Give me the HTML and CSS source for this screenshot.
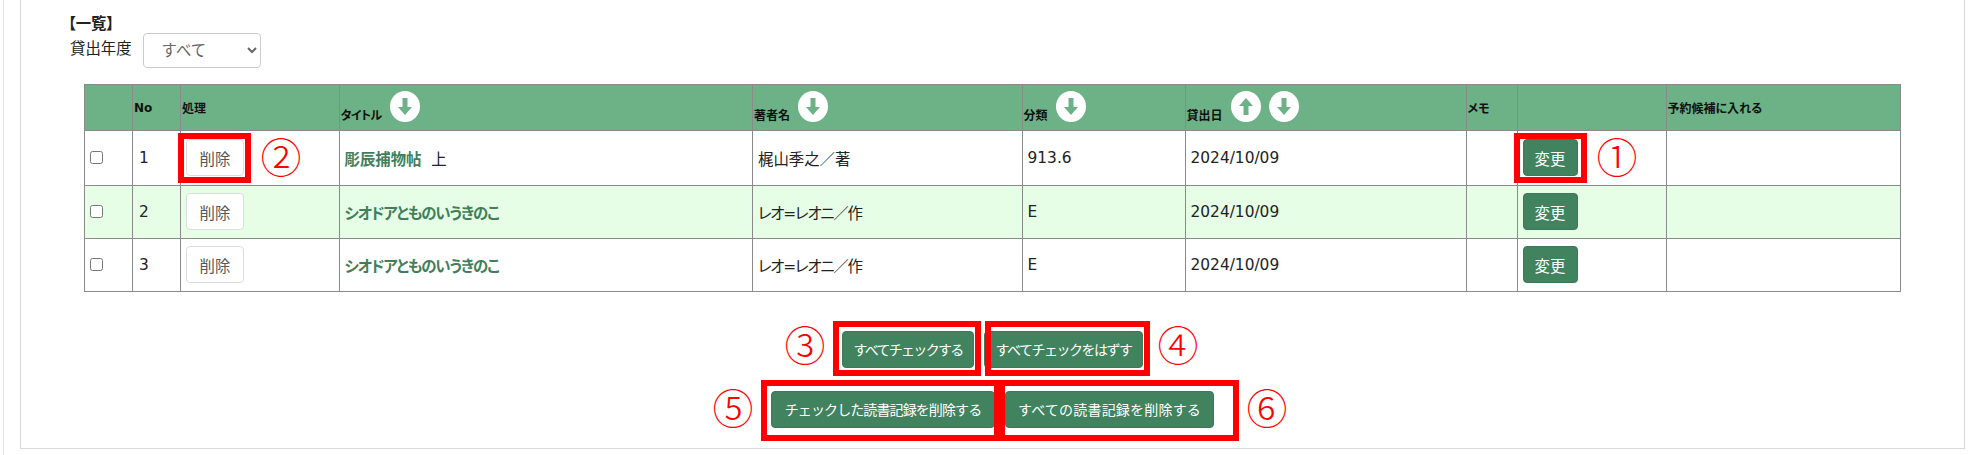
FILE: index.html
```html
<!DOCTYPE html>
<html lang="ja">
<head>
    <meta charset="UTF-8">
    <title>読書記録</title>
    <link rel="stylesheet" href="styles.css">
</head>
<body>
    <div class="page">
        <div class="panel">
            <div class="list-title">【一覧】</div>
            <div class="year-filter">
                <label for="year">貸出年度</label>
                <select id="year"><option>すべて</option></select>
            </div>

            <table class="records">
                <colgroup>
                    <col class="c-check"><col class="c-no"><col class="c-action"><col class="c-title"><col class="c-author">
                    <col class="c-class"><col class="c-date"><col class="c-memo"><col class="c-change"><col class="c-reserve">
                </colgroup>
                <thead>
                    <tr>
                        <th></th>
                        <th>No</th>
                        <th>処理</th>
                        <th class="sortable"><span class="th-title">タイトル</span> <svg class="sort" viewBox="0 0 30 31"><ellipse cx="15" cy="15.5" rx="15" ry="15.5" fill="#fff"/><path d="M12.5 7h5v9h4.5l-7 8-7-8h4.5z" fill="#6db286"/></svg></th>
                        <th class="sortable">著者名 <svg class="sort" viewBox="0 0 30 31"><ellipse cx="15" cy="15.5" rx="15" ry="15.5" fill="#fff"/><path d="M12.5 7h5v9h4.5l-7 8-7-8h4.5z" fill="#6db286"/></svg></th>
                        <th class="sortable">分類 <svg class="sort" viewBox="0 0 30 31"><ellipse cx="15" cy="15.5" rx="15" ry="15.5" fill="#fff"/><path d="M12.5 7h5v9h4.5l-7 8-7-8h4.5z" fill="#6db286"/></svg></th>
                        <th class="sortable">貸出日 <svg class="sort" viewBox="0 0 30 31"><ellipse cx="15" cy="15.5" rx="15" ry="15.5" fill="#fff"/><path d="M12.5 24h5v-9h4.5l-7-8-7 8h4.5z" fill="#6db286"/></svg> <svg class="sort" viewBox="0 0 30 31"><ellipse cx="15" cy="15.5" rx="15" ry="15.5" fill="#fff"/><path d="M12.5 7h5v9h4.5l-7 8-7-8h4.5z" fill="#6db286"/></svg></th>
                        <th>メモ</th>
                        <th></th>
                        <th>予約候補に入れる</th>
                    </tr>
                </thead>
                <tbody>
                    <tr class="first">
                        <td><input type="checkbox"></td>
                        <td class="no">1</td>
                        <td><button class="btn btn-white">削除</button></td>
                        <td><a class="book">彫辰捕物帖</a>&nbsp; 上</td>
                        <td>梶山季之／著</td>
                        <td>913.6</td>
                        <td>2024/10/09</td>
                        <td></td>
                        <td><button class="btn btn-green">変更</button></td>
                        <td></td>
                    </tr>
                    <tr class="even">
                        <td><input type="checkbox"></td>
                        <td class="no">2</td>
                        <td><button class="btn btn-white">削除</button></td>
                        <td><a class="book kana">シオドアとものいうきのこ</a></td>
                        <td class="kana">レオ=レオニ／作</td>
                        <td>E</td>
                        <td>2024/10/09</td>
                        <td></td>
                        <td><button class="btn btn-green">変更</button></td>
                        <td></td>
                    </tr>
                    <tr>
                        <td><input type="checkbox"></td>
                        <td class="no">3</td>
                        <td><button class="btn btn-white">削除</button></td>
                        <td><a class="book kana">シオドアとものいうきのこ</a></td>
                        <td class="kana">レオ=レオニ／作</td>
                        <td>E</td>
                        <td>2024/10/09</td>
                        <td></td>
                        <td><button class="btn btn-green">変更</button></td>
                        <td></td>
                    </tr>
                </tbody>
            </table>

            <div class="actions">
                <div class="action-row">
                    <button class="btn btn-green w-check">すべてチェックする</button>
                    <button class="btn btn-green w-uncheck">すべてチェックをはずす</button>
                </div>
                <div class="action-row">
                    <button class="btn btn-green w-del-checked">チェックした読書記録を削除する</button>
                    <button class="btn btn-green w-del-all">すべての読書記録を削除する</button>
                </div>
            </div>
        </div>

        <!-- 説明用の赤枠と番号 -->
        <div class="box box-1"></div>
        <div class="box box-2"></div>
        <div class="box box-3"></div>
        <div class="box box-4"></div>
        <div class="box box-5"></div>
        <div class="box box-6"></div>
        <span class="num num-1">①</span>
        <span class="num num-2">②</span>
        <span class="num num-3">③</span>
        <span class="num num-4">④</span>
        <span class="num num-5">⑤</span>
        <span class="num num-6">⑥</span>
    </div>
</body>
</html>
```

FILE: styles.css
```css
html, body {
    margin: 0;
    height: 100%;
    background-color: #fff;
}

body {
    font-family: "DejaVu Sans", "Noto Sans CJK JP", sans-serif;
    font-size: 15.4px;
    font-feature-settings: "palt";
    color: #222;
    overflow: hidden;
}

.page {
    position: relative;
    height: 455px;
    margin-left: 3px;
    padding-left: 16px;
    border-left: 1px solid #e8e8e8;
    box-sizing: border-box;
}

.panel {
    width: 1945px;
    height: 449px;
    box-sizing: border-box;
    padding: 16px 47px 0;
    border: 1px solid #d9d9d9;
    border-top: none;
}

.list-title {
    font-size: 15.4px;
    font-weight: bold;
    line-height: 17px;
}

.year-filter {
    display: flex;
    align-items: flex-start;
    gap: 11px;
    margin-left: 2px;
}

.year-filter label {
    line-height: 32px;
}

.year-filter select {
    width: 118px;
    height: 35px;
    padding-left: 14px;
    font-family: inherit;
    font-size: 15.4px;
    color: #666;
    background-color: #fff;
    border: 1px solid #ccc;
    border-radius: 4px;
}

.records {
    table-layout: fixed;
    width: 1815.5px;
    margin: 16px 0 0 16px;
    border-collapse: collapse;
}

.c-check { width: 48px; }
.c-no { width: 48px; }
.c-action { width: 158.5px; }
.c-title { width: 413.5px; }
.c-author { width: 269.5px; }
.c-class { width: 163px; }
.c-date { width: 281px; }
.c-memo { width: 51px; }
.c-change { width: 149px; }
.c-reserve { width: 234px; }

.records th, .records td {
    border: 1px solid #8a8a8a;
    text-align: left;
}

.records th {
    height: 45px;
    padding: 0 0 0 1px;
    font-size: 12px;
    color: #111;
    background-color: #6db286;
}

.records th.sortable {
    height: 37px;
    vertical-align: bottom;
    padding-bottom: 8px;
    line-height: 1;
}

.th-title {
    letter-spacing: -0.6px;
}

.sort {
    width: 30px;
    height: 31px;
    margin-left: 4px;
    vertical-align: -2px;
}

.records td {
    height: 52px;
    padding: 0 5px;
}

.records .first td {
    height: 53.5px;
}

.records td input {
    display: block;
    width: 13px;
    height: 13px;
    margin: 0;
}

.records td.no {
    padding-left: 6px;
}

.even td {
    background-color: #e6fde6;
}

.book {
    font-weight: bold;
    color: #417f5c;
}

.kana {
    letter-spacing: -1.2px;
}

.btn {
    height: 37px;
    padding: 0;
    font-family: inherit;
    font-size: 15.4px;
    white-space: nowrap;
    border-radius: 4px;
    border: 1px solid transparent;
}

.btn-white {
    width: 58px;
    color: #555;
    background-color: #fff;
    border-color: #ddd;
}

.btn-green {
    color: #fff;
    background-color: #41835e;
    border-color: #3a7a56;
}

.records .btn {
    display: block;
}

.records .btn-green {
    width: 55px;
}

.actions {
    display: flex;
    flex-direction: column;
    gap: 23px;
    margin-top: 39px;
}

.action-row {
    display: flex;
    justify-content: center;
    gap: 10px;
}

.action-row .btn {
    font-size: 14px;
}

.action-row .w-check { width: 132px; letter-spacing: -1.7px; }
.action-row .w-uncheck { width: 159px; letter-spacing: -1.5px; }
.action-row .w-del-checked { width: 224px; letter-spacing: -0.9px; }
.action-row .w-del-all { width: 209px; letter-spacing: 0.2px; }

.box {
    position: absolute;
    box-sizing: border-box;
    border: 6px solid #f00;
}

/* .page starts at x=3 with a 1px border, so offsets are page x - 4 */
.box-1 { left: 1510px; top: 133px; width: 73px; height: 50px; }
.box-2 { left: 174px; top: 133px; width: 73px; height: 50px; }
.box-3 { left: 829px; top: 321px; width: 148px; height: 55px; }
.box-4 { left: 981px; top: 321px; width: 165px; height: 55px; }
.box-5 { left: 757px; top: 380px; width: 239px; height: 61px; }
.box-6 { left: 995px; top: 380px; width: 240px; height: 61px; }

.num {
    position: absolute;
    width: 42px;
    height: 42px;
    font-family: "Noto Sans CJK JP", sans-serif;
    font-size: 41px;
    font-weight: 300;
    line-height: 42px;
    text-align: center;
    color: #f00;
}

.num-1 { left: 1592px; top: 134px; }
.num-2 { left: 256px; top: 134px; }
.num-3 { left: 780px; top: 322px; }
.num-4 { left: 1153px; top: 322px; }
.num-5 { left: 708px; top: 385px; }
.num-6 { left: 1242px; top: 385px; }
```
